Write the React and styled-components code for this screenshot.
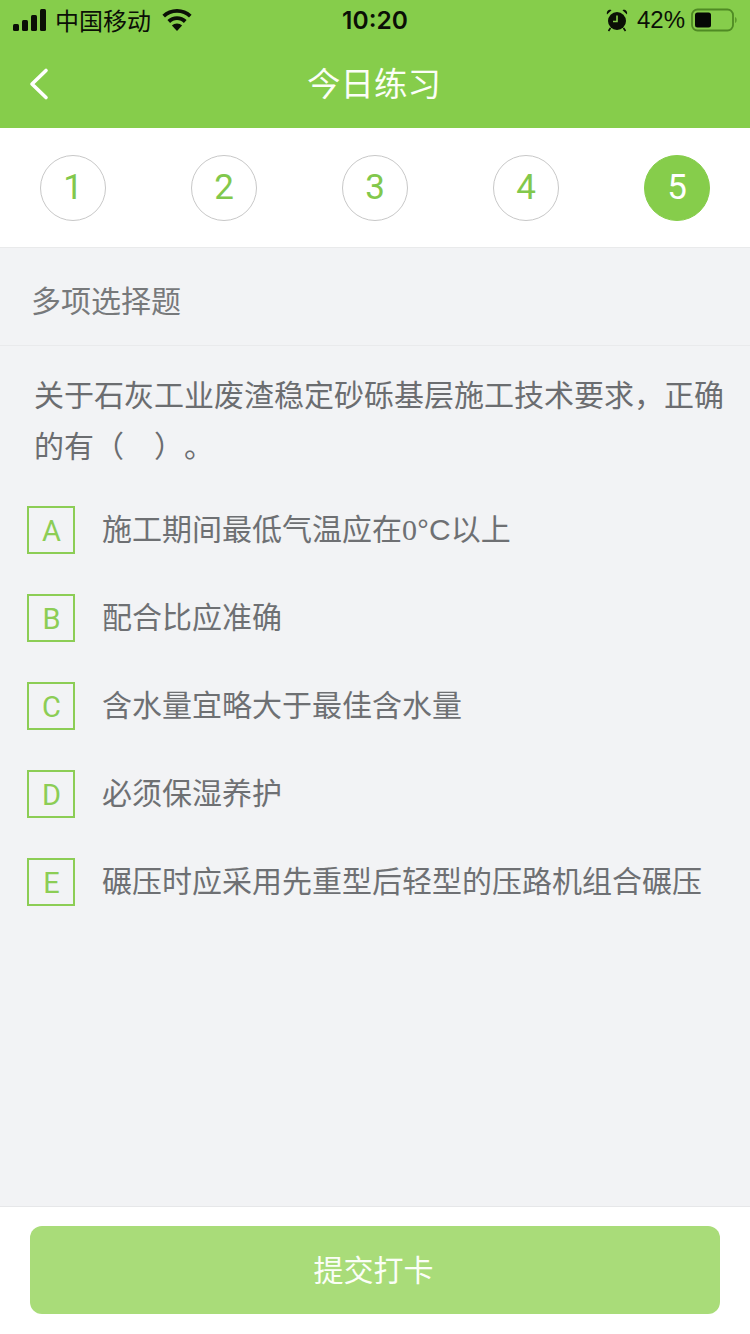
import React from "react";
import styled, { createGlobalStyle } from "styled-components";

const Global = createGlobalStyle`
  html, body { margin: 0; padding: 0; background: #f2f3f5; }
`;
const Page = styled.div`
  width: 750px; height: 1334px; display: flex; flex-direction: column;
  background: #f2f3f5; overflow: hidden;
  font-family: "Liberation Sans", "Noto Sans CJK SC", sans-serif;
`;
const Header = styled.header`background: #86cd4b; height: 128px; display: flex; flex-direction: column;`;
const StatusBar = styled.div`
  height: 40px; display: grid; grid-template-columns: 1fr auto 1fr; align-items: center;
  padding: 0 13px; color: #0b0f06;
`;
const StatusLeft = styled.div`display: flex; align-items: center; gap: 8px;`;
const StatusRight = styled.div`display: flex; align-items: center; justify-content: flex-end; gap: 7px;`;
const Carrier = styled.span`font-size: 24px; font-weight: 400; margin-top: -2px; margin-right: 3px;`;
const Clock = styled.span`font-size: 24.5px; font-weight: 600; font-family: Inter, "Liberation Sans", sans-serif;`;
const Percent = styled.span`font-size: 24px; font-family: "Liberation Sans", sans-serif; margin-left: 2px; margin-right: -1px;`;
const NavBar = styled.div`
  height: 88px; position: relative; display: flex; align-items: center; justify-content: center;
`;
const Title = styled.h1`
  margin: 0 2px 6px 0; font-size: 33.5px; font-weight: 400; color: #fbfef7;
`;
const Back = styled.svg`position: absolute; left: 28px; top: 27px;`;
const Steps = styled.nav`
  height: 119px; background: #fff; border-bottom: 1px solid #e9eaeb; display: flex;
  align-items: center; justify-content: space-between; padding: 0 40px; box-sizing: content-box;
`;
const Step = styled.div`
  width: 66px; height: 66px; box-sizing: border-box; border-radius: 50%;
  display: flex; align-items: center; justify-content: center;
  font-family: Roboto, "Liberation Sans", sans-serif; font-weight: 400; font-size: 35px;
  border: 1px solid ${p => (p.$active ? "#86cd4b" : "#c8c8c8")};
  background: ${p => (p.$active ? "#86cd4b" : "#fff")};
  color: ${p => (p.$active ? "#fff" : "#82c84c")};
`;
const TypeRow = styled.div`
  height: 98px; border-bottom: 1px solid #e9eaec; display: flex; align-items: center;
  padding: 5px 31px 0; box-sizing: border-box; font-size: 30px; color: #77797b;
`;
const Question = styled.p`
  margin: 0; padding: 24px 20px 0 34px; font-size: 30px; line-height: 51px; color: #6b6d70;
  text-spacing-trim: space-all;
`;
const Options = styled.ul`
  list-style: none; margin: 0; padding: 34px 0 0 27px; flex: 1;
`;
const Option = styled.li`
  height: 88px; display: flex; align-items: flex-start; gap: 27px;
`;
const Letter = styled.span`
  width: 48px; height: 48px; box-sizing: border-box; border: 2px solid #8ccd55; flex: none;
  display: flex; align-items: center; justify-content: center; padding: 1px 0 0 1px;
  font-family: Roboto, "Liberation Sans", sans-serif; font-weight: 400; font-size: 29px; color: #8ccd55;
`;
const OptionText = styled.span`
  font-size: 30px; line-height: 48px; color: #6e7073; white-space: nowrap;
`;
const Serif = styled.span`font-family: "Liberation Serif", serif;`;
const Footer = styled.footer`
  height: 128px; box-sizing: border-box; background: #fff; border-top: 1px solid #e6e7e9;
  padding: 19px 30px 0;
`;
const Submit = styled.button`
  width: 690px; height: 88px; border: 0; border-radius: 12px; background: #a9dc79; color: #fbfef7;
  font: inherit; font-size: 30px; display: block; padding: 0 3px 5px 0;
`;

const Signal = () => (
  <svg width="34" height="22" viewBox="0 0 34 22" fill="#0b0f06">
    <rect x="0" y="15" width="6" height="7" rx="1.5" />
    <rect x="9" y="11" width="6" height="11" rx="1.5" />
    <rect x="18" y="6" width="6" height="16" rx="1.5" />
    <rect x="27" y="0" width="6" height="22" rx="1.5" />
  </svg>
);
const Wifi = () => (
  <svg width="30" height="22" viewBox="0 0 30 22" fill="#0b0f06">
    <path d="M15 0C9.3 0 4.2 2.2.4 5.8l2.6 2.8C6.1 5.6 10.3 3.8 15 3.8s8.900 1.800 12 4.800l2.600-2.800C25.800 2.200 20.700 0 15 0z" />
    <path d="M15 7.200c-3.700 0-7.100 1.400-9.600 3.800l2.700 2.900c1.800-1.700 4.200-2.800 6.900-2.800s5.100 1.100 6.900 2.800l2.700-2.900c-2.500-2.400-5.900-3.800-9.600-3.800z" />
    <path d="M15 14.400c-2 0-3.800.8-5.100 2L15 22l5.100-5.600c-1.300-1.200-3.100-2-5.100-2z" />
  </svg>
);
const Alarm = () => (
  <svg width="22" height="24" viewBox="0 0 22 24">
    <circle cx="11" cy="13" r="9" fill="#0b0f06" />
    <path d="M1 6.500 5.500 2.200C3.500.8 0 2.800 1 6.500zM21 6.500 16.500 2.200C18.500.8 22 2.800 21 6.500z" fill="#0b0f06" />
    <path d="M4.500 20 2.500 23M17.500 20l2 3" stroke="#0b0f06" strokeWidth="1.600" />
    <path d="M11 7.500V13.500H7" stroke="#86cd4b" strokeWidth="1.600" fill="none" />
  </svg>
);
const Battery = () => (
  <svg width="46" height="24" viewBox="0 0 46 24">
    <rect x="1" y="1.500" width="41" height="21" rx="5.500" fill="none" stroke="#4f8a24" strokeWidth="1.800" />
    <rect x="4" y="4.500" width="16" height="15" rx="2.500" fill="#050705" />
    <path d="M44 9c1.200.6 1.700 1.600 1.700 3s-.5 2.400-1.700 3z" fill="#5c9a2c" />
  </svg>
);

const options = [
  ["A", <>施工期间最低气温应在<Serif>0</Serif>°C以上</>],
  ["B", "配合比应准确"],
  ["C", "含水量宜略大于最佳含水量"],
  ["D", "必须保湿养护"],
  ["E", "碾压时应采用先重型后轻型的压路机组合碾压"],
];

export default function App() {
  return (
    <Page>
      <Global />
      <Header>
        <StatusBar>
          <StatusLeft>
            <Signal />
            <Carrier>中国移动</Carrier>
            <Wifi />
          </StatusLeft>
          <Clock>10:20</Clock>
          <StatusRight>
            <Alarm />
            <Percent>42%</Percent>
            <Battery />
          </StatusRight>
        </StatusBar>
        <NavBar>
          <Back width="22" height="34" viewBox="0 0 22 34" fill="none">
            <path d="M18 3.500 4 17l14 13.500" stroke="#fff" strokeWidth="3.600" strokeLinecap="round" strokeLinejoin="round" />
          </Back>
          <Title>今日练习</Title>
        </NavBar>
      </Header>
      <Steps>
        {[1, 2, 3, 4, 5].map(n => (
          <Step key={n} $active={n === 5}>{n}</Step>
        ))}
      </Steps>
      <TypeRow>多项选择题</TypeRow>
      <Question>关于石灰工业废渣稳定砂砾基层施工技术要求，正确的有（　）。</Question>
      <Options>
        {options.map(([l, t]) => (
          <Option key={l}>
            <Letter>{l}</Letter>
            <OptionText>{t}</OptionText>
          </Option>
        ))}
      </Options>
      <Footer>
        <Submit>提交打卡</Submit>
      </Footer>
    </Page>
  );
}
